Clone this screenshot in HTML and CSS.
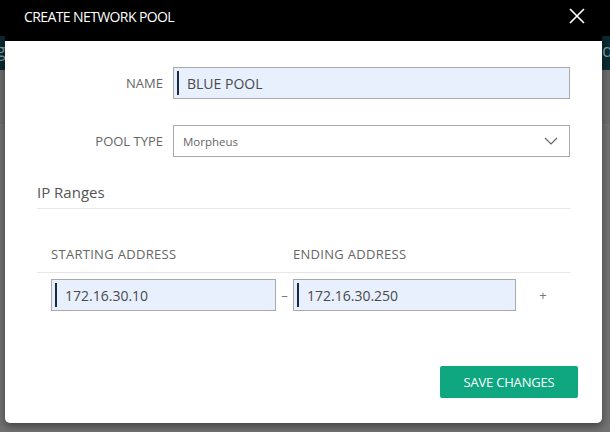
FILE: index.html
```html
<!DOCTYPE html>
<html>
<head>
<meta charset="utf-8">
<link rel="stylesheet" href="styles.css">
</head>
<body>
<div class="page">
  <div class="page-top"></div>
  <div class="page-sub"><span class="sub-l">g</span><span class="sub-r">d</span></div>
  <div class="page-rest"></div>
</div>
<div class="modal">
  <div class="modal-header">
    <span class="modal-title">CREATE NETWORK POOL</span>
    <svg class="close" width="16" height="16" viewBox="0 0 16 16"><path d="M1 1L15 15M15 1L1 15" stroke="#fff" stroke-width="1.6" fill="none"/></svg>
  </div>
  <div class="modal-body">
    <div class="form-row">
      <label class="form-label">NAME</label>
      <div class="input filled"><span class="bar"></span>BLUE POOL</div>
    </div>
    <div class="form-row">
      <label class="form-label">POOL TYPE</label>
      <div class="select"><span>Morpheus</span>
        <svg width="14" height="8" viewBox="0 0 14 8"><path d="M1 1L7 7L13 1" stroke="#666" stroke-width="1.2" fill="none"/></svg>
      </div>
    </div>
    <div class="section-title">IP Ranges</div>
    <div class="range-head">
      <div class="col-start">STARTING ADDRESS</div>
      <div class="col-dash"></div>
      <div class="col-end">ENDING ADDRESS</div>
    </div>
    <div class="range-row">
      <div class="input filled col-start"><span class="bar"></span>172.16.30.10</div>
      <div class="col-dash dash">–</div>
      <div class="input filled col-end"><span class="bar"></span>172.16.30.250</div>
      <div class="col-add">+</div>
    </div>
    <div class="footer">
      <button class="btn-save">SAVE CHANGES</button>
    </div>
  </div>
</div>
</body>
</html>
```
FILE: styles.css
```css
* { box-sizing: border-box; }
html, body { margin: 0; padding: 0; }
body {
  width: 610px;
  height: 432px;
  overflow: hidden;
  background: #6e6e6e;
  font-family: "Open Sans", "Noto Sans", sans-serif;
  position: relative;
}
.page { display: flex; flex-direction: column; height: 432px; }
.page-top { height: 36px; background: #000; }
.page-sub {
  height: 34px;
  background: #0b2a30;
  display: flex;
  justify-content: space-between;
  align-items: center;
  color: #7f9ca0;
  font-size: 18px;
  padding: 0 0 6px 0;
}
.sub-l { margin-left: -4px; }
.sub-r { margin-right: -3px; }
.page-rest { flex: 1; background: #727272; border-top: 1px solid #6f7a70; margin-top: 54px; }

.modal {
  position: absolute;
  left: 5px;
  top: 0;
  width: 597px;
  height: 423px;
  background: #fff;
  border-radius: 0 0 5px 5px;
  box-shadow: 0 3px 8px rgba(0,0,0,0.45);
  overflow: hidden;
}
.modal-header {
  height: 41px;
  background: #000;
  display: flex;
  align-items: center;
  justify-content: space-between;
  padding: 0 17px 0 19px;
}
.modal-title {
  color: #fff;
  font-size: 14px;
  letter-spacing: -0.6px;
  padding-bottom: 8px;
}
.close { margin-bottom: 9px; }

.modal-body { padding: 26px 32px 0 32px; }
.form-row {
  display: flex;
  align-items: center;
  gap: 10px;
  margin-bottom: 26px;
}
.form-label {
  width: 126px;
  text-align: right;
  color: #666;
  font-size: 13px;
}
.input {
  height: 32px;
  border: 1px solid #a9a9a9;
  display: flex;
  align-items: center;
  font-size: 14px;
  color: #4a4a4a;
  padding-left: 3px;
}
.form-row .input, .form-row .select { flex: 1; }
.filled { background: #e8f0fe; }
.bar {
  width: 2px;
  height: 24px;
  background: #1b2a44;
  margin-right: 8px;
}
.select {
  height: 32px;
  border: 1px solid #a9a9a9;
  display: flex;
  align-items: center;
  justify-content: space-between;
  padding: 0 11px 0 9px;
  font-size: 11.5px;
  color: #666;
}
.section-title {
  font-size: 15px;
  color: #555;
  padding: 0 0 6px 0;
  margin-top: -1px;
  border-bottom: 1px solid #e6e6e6;
}
.range-head {
  display: flex;
  font-size: 13px;
  letter-spacing: 0.3px;
  color: #666;
  padding: 36px 0 9px 14px;
  border-bottom: 1px solid #e6e6e6;
}
.col-start { width: 225px; }
.col-dash { width: 17px; }
.col-end { width: 223px; }
.col-add { flex: 1; text-align: center; color: #777; font-size: 13px; }
.range-row {
  display: flex;
  align-items: center;
  padding: 6px 0 0 14px;
}
.dash { text-align: center; color: #777; font-size: 13px; }
.footer {
  display: flex;
  justify-content: flex-end;
  margin-top: 55px;
  margin-right: -8px;
}
.btn-save {
  width: 138px;
  height: 32px;
  background: #0ea77f;
  color: #fff;
  border: none;
  border-radius: 2px;
  font-family: inherit;
  font-size: 13px;
  letter-spacing: -0.2px;
}
```
